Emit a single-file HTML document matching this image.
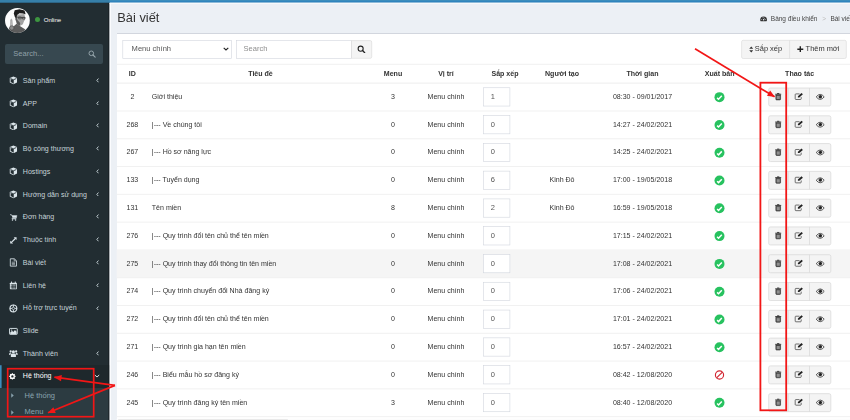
<!DOCTYPE html>
<html lang="vi"><head><meta charset="utf-8"><title>Bài viết</title>
<style>
*{box-sizing:border-box;margin:0;padding:0}
html,body{width:850px;height:420px;overflow:hidden}
body{background:#ecf0f5;font-family:"Liberation Sans",Arial,sans-serif;color:#333;position:relative;font-size:7.05px}
.abs{position:absolute}
#topbar{left:0;top:0;width:850px;height:2.4px;background:#3c8dbc}
#toplogo{left:0;top:0;width:109.2px;height:2.4px;background:#367fa9}
#side{left:0;top:2.4px;width:109.2px;height:418px;background:#222d32}
  .mtext{position:absolute;left:22.8px;font-size:7.08px;color:#c6d3d9;line-height:10px;height:10px;white-space:nowrap}
.mi{position:absolute;left:8.9px;width:8.8px;height:8.8px}
.chev{position:absolute;left:95.8px;width:3.2px;height:4.8px}
.c{position:absolute;width:120px;text-align:center;white-space:nowrap;line-height:10px;height:10px}
.l{position:absolute;white-space:nowrap;line-height:10px;height:10px}
.th{font-weight:bold}
.rowline{position:absolute;left:116.7px;width:740px;height:0.6px;background:#f0f0f0}
.inp{position:absolute;left:483.2px;width:26.8px;height:18.7px;border:0.6px solid #d2d6de;background:#fff;font-size:7.05px;line-height:17.5px;padding-left:8.6px;color:#555}
.btn{position:absolute;height:18px;background:#f4f4f4;border:0.6px solid #ddd}
.ico{position:absolute}
</style></head><body style="filter:blur(0.3px)">

<svg class="abs" style="left:0;top:0;width:850px;height:420px" viewBox="0 0 850 420">
<rect x="0" y="2" width="109.4" height="420" fill="#222d32"/>
<rect x="0" y="365.2" width="109.4" height="22.9" fill="#1e282c"/><rect x="0" y="365.2" width="1.6" height="22.9" fill="#3c8dbc"/>
<rect x="0" y="388.1" width="109.4" height="33" fill="#2c3b41"/>
<path d="M108.95 2.4 V420" stroke="#141b1e" stroke-width="0.9"/>
<path d="M110.3 3 V420" stroke="#fbfcfe" stroke-width="1.5"/><path d="M109.6 3.45 H850" stroke="#f9fafc" stroke-width="0.9"/>
<rect x="0" y="0" width="850" height="2.3" fill="#3c8dbc"/><rect x="0" y="1" width="850" height="1.3" fill="#2f84bd"/><rect x="0" y="0" width="109.4" height="2.3" fill="#367fa9"/>
</svg>
<svg class="abs" style="left:5.3px;top:7.95px;width:24.9px;height:24.9px" viewBox="0 0 50 50">
<defs><clipPath id="av"><circle cx="25" cy="25" r="25"/></clipPath></defs>
<g clip-path="url(#av)"><rect width="50" height="50" fill="#fcfcfc"/>
<path d="M23.8 31 L29.8 36.2 L41 43 L36 50 L9 50 L8.3 39.7 L17 37 Z" fill="#5d5d5d"/>
<path d="M20.3 13.8 L39.3 12 L40.4 22.4 L37.5 28 L35.9 32.8 L29.8 36.4 L23.8 31 L20.6 23Z" fill="#a3a3a3"/>
<path d="M21 22 L24 31.4 L29.6 36.4 L30.5 30 L25 24 L23 15Z" fill="#5a5a5a"/>
<path d="M17.6 11 L19.5 4.6 L29 2.4 L39.3 5 L41.4 12.6 L36 11.2 L29 10.4 L24.2 14 L22.6 19.5 L20.2 19Z" fill="#1d1d1d"/>
<path d="M23 18.4 L41 19.6 M27.5 18 h5.2 v3.8 h-5.2z M35.2 18.6 h5 v3.6 h-5z" stroke="#2a2a2a" stroke-width="1.1" fill="none"/>
<path d="M11.2 37 L11.6 23.4 Q12.8 21.6 14 23.4 L15 37Z" fill="#c9c9c9" stroke="#555" stroke-width=".8"/>
<circle cx="13.6" cy="40" r="4.4" fill="#8d8d8d" stroke="#3a3a3a" stroke-width="1"/>
</g></svg>
<div class="abs" style="left:35.2px;top:16.6px;width:5px;height:5px;border-radius:50%;background:#3d9640"></div>
<div class="l" style="left:43.7px;top:14.7px;font-size:6.05px;color:#fff">Online</div>
<div class="abs" style="left:5.3px;top:43.7px;width:98px;height:20px;background:#374850;border-radius:2px"></div>
<div class="l" style="left:13.3px;top:48.6px;font-size:7.55px;color:#90a0a8">Search...</div>
<svg class="abs" style="left:87.8px;top:49.8px;width:8px;height:8px" viewBox="0 0 16 16"><circle cx="6.6" cy="6.6" r="4.6" fill="none" stroke="#97a6ad" stroke-width="1.9"/><path d="M10 10 L14.4 14.4" stroke="#97a6ad" stroke-width="2.2" stroke-linecap="round"/></svg>
<svg class="mi" style="top:76.2px" viewBox="0 0 16 16"><path d="M8 0.8 L14.6 3.6 V11.6 L8 15.2 L1.4 11.6 V3.6 Z" fill="#dbe5ea"/><path d="M2.6 4.6 L8 6.9 L13.4 4.6 M8 6.9 V13.8" stroke="#222d32" stroke-width="1.5" fill="none"/><path d="M3 5.3 L7.3 7.2 V13 L3 10.8Z" fill="#222d32"/></svg>
<div class="mtext" style="top:75.7px">Sản phẩm</div>
<svg class="chev" style="top:77.8px" viewBox="0 0 6 9"><path d="M4.6 1 L1.6 4.5 L4.6 8" fill="none" stroke="#cfdbe0" stroke-width="1.7"/></svg>
<svg class="mi" style="top:99.0px" viewBox="0 0 16 16"><path d="M8 0.8 L14.6 3.6 V11.6 L8 15.2 L1.4 11.6 V3.6 Z" fill="#dbe5ea"/><path d="M2.6 4.6 L8 6.9 L13.4 4.6 M8 6.9 V13.8" stroke="#222d32" stroke-width="1.5" fill="none"/><path d="M3 5.3 L7.3 7.2 V13 L3 10.8Z" fill="#222d32"/></svg>
<div class="mtext" style="top:98.5px">APP</div>
<svg class="chev" style="top:100.6px" viewBox="0 0 6 9"><path d="M4.6 1 L1.6 4.5 L4.6 8" fill="none" stroke="#cfdbe0" stroke-width="1.7"/></svg>
<svg class="mi" style="top:121.7px" viewBox="0 0 16 16"><path d="M8 0.8 L14.6 3.6 V11.6 L8 15.2 L1.4 11.6 V3.6 Z" fill="#dbe5ea"/><path d="M2.6 4.6 L8 6.9 L13.4 4.6 M8 6.9 V13.8" stroke="#222d32" stroke-width="1.5" fill="none"/><path d="M3 5.3 L7.3 7.2 V13 L3 10.8Z" fill="#222d32"/></svg>
<div class="mtext" style="top:121.2px">Domain</div>
<svg class="chev" style="top:123.3px" viewBox="0 0 6 9"><path d="M4.6 1 L1.6 4.5 L4.6 8" fill="none" stroke="#cfdbe0" stroke-width="1.7"/></svg>
<svg class="mi" style="top:144.5px" viewBox="0 0 16 16"><path d="M8 0.8 L14.6 3.6 V11.6 L8 15.2 L1.4 11.6 V3.6 Z" fill="#dbe5ea"/><path d="M2.6 4.6 L8 6.9 L13.4 4.6 M8 6.9 V13.8" stroke="#222d32" stroke-width="1.5" fill="none"/><path d="M3 5.3 L7.3 7.2 V13 L3 10.8Z" fill="#222d32"/></svg>
<div class="mtext" style="top:144.0px">Bộ công thương</div>
<svg class="chev" style="top:146.1px" viewBox="0 0 6 9"><path d="M4.6 1 L1.6 4.5 L4.6 8" fill="none" stroke="#cfdbe0" stroke-width="1.7"/></svg>
<svg class="mi" style="top:167.3px" viewBox="0 0 16 16"><path d="M8 0.8 L14.6 3.6 V11.6 L8 15.2 L1.4 11.6 V3.6 Z" fill="#dbe5ea"/><path d="M2.6 4.6 L8 6.9 L13.4 4.6 M8 6.9 V13.8" stroke="#222d32" stroke-width="1.5" fill="none"/><path d="M3 5.3 L7.3 7.2 V13 L3 10.8Z" fill="#222d32"/></svg>
<div class="mtext" style="top:166.8px">Hostings</div>
<svg class="chev" style="top:168.9px" viewBox="0 0 6 9"><path d="M4.6 1 L1.6 4.5 L4.6 8" fill="none" stroke="#cfdbe0" stroke-width="1.7"/></svg>
<svg class="mi" style="top:190.1px" viewBox="0 0 16 16"><path d="M8 0.8 L14.6 3.6 V11.6 L8 15.2 L1.4 11.6 V3.6 Z" fill="#dbe5ea"/><path d="M2.6 4.6 L8 6.9 L13.4 4.6 M8 6.9 V13.8" stroke="#222d32" stroke-width="1.5" fill="none"/><path d="M3 5.3 L7.3 7.2 V13 L3 10.8Z" fill="#222d32"/></svg>
<div class="mtext" style="top:189.6px">Hướng dẫn sử dụng</div>
<svg class="chev" style="top:191.7px" viewBox="0 0 6 9"><path d="M4.6 1 L1.6 4.5 L4.6 8" fill="none" stroke="#cfdbe0" stroke-width="1.7"/></svg>
<svg class="mi" style="top:212.8px" viewBox="0 0 16 16"><g transform="translate(1.6 1.4) scale(0.84)"><path d="M0.5 2 H3.2 L4 4 H15 L13.6 9.6 H5 L4.6 11 H13.8" stroke="#dbe5ea" stroke-width="1.7" fill="none"/><path d="M4.6 5 H14 L13.1 8.6 H5.6Z" fill="#dbe5ea"/><circle cx="5.6" cy="13.4" r="1.5" fill="#dbe5ea"/><circle cx="12.4" cy="13.4" r="1.5" fill="#dbe5ea"/></g></svg>
<div class="mtext" style="top:212.3px">Đơn hàng</div>
<svg class="chev" style="top:214.4px" viewBox="0 0 6 9"><path d="M4.6 1 L1.6 4.5 L4.6 8" fill="none" stroke="#cfdbe0" stroke-width="1.7"/></svg>
<svg class="mi" style="top:235.6px" viewBox="0 0 16 16"><path d="M4 12 L12 4" stroke="#dbe5ea" stroke-width="2.2"/><path d="M8.5 2.2 H13.8 V7.5Z M2.2 8.5 V13.8 H7.5Z" fill="#dbe5ea"/></svg>
<div class="mtext" style="top:235.1px">Thuộc tính</div>
<svg class="chev" style="top:237.2px" viewBox="0 0 6 9"><path d="M4.6 1 L1.6 4.5 L4.6 8" fill="none" stroke="#cfdbe0" stroke-width="1.7"/></svg>
<svg class="mi" style="top:258.4px" viewBox="0 0 16 16"><path d="M2.4 1.4 H9.6 L13.6 5 V14.8 H2.4Z" fill="none" stroke="#dbe5ea" stroke-width="1.5" stroke-linejoin="round"/><path d="M9.4 1.6 V5.2 H13.4" fill="none" stroke="#dbe5ea" stroke-width="1.1"/><path d="M5 7.6 H11 M5 9.9 H11 M5 12.2 H11" stroke="#dbe5ea" stroke-width="1.1"/></svg>
<div class="mtext" style="top:257.9px">Bài viết</div>
<svg class="chev" style="top:260.0px" viewBox="0 0 6 9"><path d="M4.6 1 L1.6 4.5 L4.6 8" fill="none" stroke="#cfdbe0" stroke-width="1.7"/></svg>
<svg class="mi" style="top:281.1px" viewBox="0 0 16 16"><rect x="1.6" y="3" width="12.8" height="11.8" rx="1" fill="#dbe5ea"/><path d="M4.6 1 V4.4 M11.4 1 V4.4" stroke="#dbe5ea" stroke-width="1.8"/><path d="M3 7 H13 M3 9.8 H13 M3 12.4 H13 M6 6 V14 M9 6 V14 M12 6 V14" stroke="#222d32" stroke-width="1.25"/></svg>
<div class="mtext" style="top:280.6px">Liên hệ</div>
<svg class="chev" style="top:282.7px" viewBox="0 0 6 9"><path d="M4.6 1 L1.6 4.5 L4.6 8" fill="none" stroke="#cfdbe0" stroke-width="1.7"/></svg>
<svg class="mi" style="top:303.9px" viewBox="0 0 16 16"><circle cx="8" cy="8" r="6.2" fill="none" stroke="#dbe5ea" stroke-width="2.2"/><path d="M1.4 8 H14.6 M8 1.4 V14.6" stroke="#dbe5ea" stroke-width="1.6"/><circle cx="8" cy="8" r="2.3" fill="#222d32" stroke="#dbe5ea" stroke-width="1.2"/></svg>
<div class="mtext" style="top:303.4px">Hỗ trợ trực tuyến</div>
<svg class="chev" style="top:305.5px" viewBox="0 0 6 9"><path d="M4.6 1 L1.6 4.5 L4.6 8" fill="none" stroke="#cfdbe0" stroke-width="1.7"/></svg>
<svg class="mi" style="top:326.7px" viewBox="0 0 16 16"><rect x="1" y="2.6" width="14" height="10.8" rx="1" fill="none" stroke="#dbe5ea" stroke-width="1.7"/><path d="M2.2 12.6 V10.2 L5.6 6.8 L7.8 9 L10.8 5.4 L13.8 8.8 V12.6Z" fill="#dbe5ea"/><circle cx="4.8" cy="5.6" r="1.2" fill="#dbe5ea"/></svg>
<div class="mtext" style="top:326.2px">Slide</div>
<svg class="mi" style="top:349.4px" viewBox="0 0 16 16"><circle cx="8" cy="5" r="2.8" fill="#dbe5ea"/><path d="M3.4 14.6 V11 Q3.4 8.4 6 8.4 H10 Q12.6 8.4 12.6 11 V14.6Z" fill="#dbe5ea"/><circle cx="3" cy="4.4" r="2" fill="#dbe5ea"/><circle cx="13" cy="4.4" r="2" fill="#dbe5ea"/><path d="M0.4 11 V8.8 Q0.4 7 2.4 7 H4 Q2.6 8.4 2.6 11Z M15.6 11 V8.8 Q15.6 7 13.6 7 H12 Q13.4 8.4 13.4 11Z" fill="#dbe5ea"/></svg>
<div class="mtext" style="top:348.9px">Thành viên</div>
<svg class="chev" style="top:351.0px" viewBox="0 0 6 9"><path d="M4.6 1 L1.6 4.5 L4.6 8" fill="none" stroke="#cfdbe0" stroke-width="1.7"/></svg>
<svg class="mi" style="top:373px;left:9.4px;width:6.8px;height:6.8px" viewBox="0 0 16 16"><circle cx="8" cy="8" r="4.4" fill="none" stroke="#fff" stroke-width="3.2"/><path d="M8 0.6 V3 M8 13 V15.4 M0.6 8 H3 M13 8 H15.4 M2.8 2.8 L4.5 4.5 M11.5 11.5 L13.2 13.2 M2.8 13.2 L4.5 11.5 M11.5 4.5 L13.2 2.8" stroke="#fff" stroke-width="2.6"/></svg>
<div class="mtext" style="top:371.3px;color:#fff">Hệ thống</div>
<svg class="abs" style="left:94.3px;top:373.8px;width:6px;height:4px" viewBox="0 0 12 8"><path d="M1.6 2 L6 6 L10.4 2" fill="none" stroke="#fff" stroke-width="1.7"/></svg>
<svg class="abs" style="left:11.3px;top:393.1px;width:3px;height:5px" viewBox="0 0 6 10"><path d="M0.5 0.5 L5.5 5 L0.5 9.5Z" fill="#8aa4af"/></svg>
<div class="l" style="left:24.6px;top:390.6px;font-size:7.5px;color:#8aa4af">Hệ thống</div>
<svg class="abs" style="left:11.3px;top:409.5px;width:3px;height:5px" viewBox="0 0 6 10"><path d="M0.5 0.5 L5.5 5 L0.5 9.5Z" fill="#8aa4af"/></svg>
<div class="l" style="left:24.6px;top:407.0px;font-size:7.5px;color:#8aa4af">Menu</div>
<div class="l" style="left:117.3px;top:9.1px;font-size:12.85px;line-height:18px;height:18px;color:#333">Bài viết</div>
<svg class="abs" style="left:759.6px;top:15.3px;width:7.2px;height:6.9px" viewBox="0 0 14 12"><path d="M0.4 9 A6.6 6.6 0 0 1 13.6 9 Q13.6 11 12.6 11.6 H1.4 Q0.4 11 0.4 9Z" fill="#333"/><circle cx="7" cy="8.6" r="1.5" fill="#ecf0f5"/><path d="M7 8.4 L9.4 4.6" stroke="#ecf0f5" stroke-width="1"/><circle cx="3" cy="8" r=".8" fill="#ecf0f5"/><circle cx="11" cy="8" r=".8" fill="#ecf0f5"/><circle cx="4.4" cy="4.8" r=".8" fill="#ecf0f5"/><circle cx="7" cy="3.6" r=".8" fill="#ecf0f5"/></svg>
<div class="l" style="left:770.8px;top:13.8px;font-size:6.5px;color:#444">Bảng điều khiển</div>
<div class="l" style="left:822.2px;top:13.8px;font-size:6.5px;color:#bbb">&gt;</div>
<div class="l" style="left:830.4px;top:13.8px;font-size:6.5px;color:#444">Bài viết</div>
<div class="abs" style="left:116.7px;top:32.6px;width:740px;height:390px;background:#fff;border-top:1.6px solid #d2d6de"></div>
<svg class="abs" style="left:0;top:0;width:850px;height:420px" viewBox="0 0 850 420">
<rect x="122.8" y="40.5" width="108.7" height="17.9" fill="#fff" stroke="#d2d6de" stroke-width="0.6"/>
<rect x="236.5" y="40.6" width="115" height="17.7" fill="#fff" stroke="#d2d6de" stroke-width="0.6"/>
<path d="M351.5 40.6 H370.2 Q371.7 40.6 371.7 42.1 V56.8 Q371.7 58.3 370.2 58.3 H351.5Z" fill="#f4f4f4" stroke="#d8d8d8" stroke-width="0.6"/>
<rect x="741.6" y="40.3" width="104.7" height="18.2" rx="1.6" fill="#f4f4f4" stroke="#d8d8d8" stroke-width="0.6"/>
<path d="M789.6 40.4 V58.4" stroke="#d8d8d8" stroke-width="0.6"/>
<path d="M116.7 64.3 H850" stroke="#f1f1f1" stroke-width="1"/>
<path d="M116.7 83.2 H850" stroke="#f1f1f1" stroke-width="1.3"/>
<rect x="483.5" y="87.75" width="26.4" height="18.3" fill="#fff" stroke="#d2d6de" stroke-width="0.6"/>
<g transform="translate(719.50 97.14)"><circle r="5" fill="#27c25f"/><path d="M-2.4 0.7 L-0.95 2.1 L2.3 -1.35" fill="none" stroke="#fff" stroke-width="1.5"/></g>
<rect x="768.7" y="88.00" width="62.1" height="18" rx="1.6" fill="#f4f4f4" stroke="#dadada" stroke-width="0.8"/>
<path d="M788.2 88.00 v18 M809.5 88.00 v18" stroke="#dadada" stroke-width="0.8"/>
<g transform="translate(778.20 96.59)"><path d="M-3 -2.35 H3 M-1.1 -3.1 H1.1" stroke="#222" stroke-width="0.85"/><path d="M-2.35 -1.6 H2.35 V2.6 Q2.35 3.3 1.65 3.3 H-1.65 Q-2.35 3.3 -2.35 2.6Z" fill="#5a5a5a" stroke="#1a1a1a" stroke-width="0.55"/><path d="M-0.95 -0.7 V2.4 M0 -0.7 V2.4 M0.95 -0.7 V2.4" stroke="#cfcfcf" stroke-width="0.5"/></g>
<g transform="translate(798.90 96.50)"><path d="M2.3 0.6 V2.3 Q2.3 3 1.6 3 H-3 Q-3.7 3 -3.7 2.3 V-1.9 Q-3.7 -2.6 -3 -2.6 H0.6" fill="none" stroke="#444" stroke-width="0.75"/><path d="M-1 1 V-0.3 L2.6 -3.5 L4 -2.2 L0.4 1Z" fill="#222"/></g>
<g transform="translate(820.20 96.89)"><path d="M-4 0 Q-2 -2.5 0 -2.5 Q2 -2.5 4 0 Q2 2.5 0 2.5 Q-2 2.5 -4 0Z" fill="#f4f4f4" stroke="#333" stroke-width="0.8"/><circle cx="0.1" cy="-0.2" r="1.75" fill="#222"/><path d="M-1.2 -0.5 A1.3 1.3 0 0 1 0 -1.55" stroke="#999" stroke-width="0.4" fill="none"/></g>
<path d="M116.7 110.99 H850" stroke="#f1f1f1" stroke-width="1"/>
<rect x="483.5" y="115.54" width="26.4" height="18.3" fill="#fff" stroke="#d2d6de" stroke-width="0.6"/>
<g transform="translate(719.50 124.94)"><circle r="5" fill="#27c25f"/><path d="M-2.4 0.7 L-0.95 2.1 L2.3 -1.35" fill="none" stroke="#fff" stroke-width="1.5"/></g>
<rect x="768.7" y="115.79" width="62.1" height="18" rx="1.6" fill="#f4f4f4" stroke="#dadada" stroke-width="0.8"/>
<path d="M788.2 115.79 v18 M809.5 115.79 v18" stroke="#dadada" stroke-width="0.8"/>
<g transform="translate(778.20 124.39)"><path d="M-3 -2.35 H3 M-1.1 -3.1 H1.1" stroke="#222" stroke-width="0.85"/><path d="M-2.35 -1.6 H2.35 V2.6 Q2.35 3.3 1.65 3.3 H-1.65 Q-2.35 3.3 -2.35 2.6Z" fill="#5a5a5a" stroke="#1a1a1a" stroke-width="0.55"/><path d="M-0.95 -0.7 V2.4 M0 -0.7 V2.4 M0.95 -0.7 V2.4" stroke="#cfcfcf" stroke-width="0.5"/></g>
<g transform="translate(798.90 124.29)"><path d="M2.3 0.6 V2.3 Q2.3 3 1.6 3 H-3 Q-3.7 3 -3.7 2.3 V-1.9 Q-3.7 -2.6 -3 -2.6 H0.6" fill="none" stroke="#444" stroke-width="0.75"/><path d="M-1 1 V-0.3 L2.6 -3.5 L4 -2.2 L0.4 1Z" fill="#222"/></g>
<g transform="translate(820.20 124.69)"><path d="M-4 0 Q-2 -2.5 0 -2.5 Q2 -2.5 4 0 Q2 2.5 0 2.5 Q-2 2.5 -4 0Z" fill="#f4f4f4" stroke="#333" stroke-width="0.8"/><circle cx="0.1" cy="-0.2" r="1.75" fill="#222"/><path d="M-1.2 -0.5 A1.3 1.3 0 0 1 0 -1.55" stroke="#999" stroke-width="0.4" fill="none"/></g>
<path d="M116.7 138.78 H850" stroke="#f1f1f1" stroke-width="1"/>
<rect x="483.5" y="143.33" width="26.4" height="18.3" fill="#fff" stroke="#d2d6de" stroke-width="0.6"/>
<g transform="translate(719.50 152.73)"><circle r="5" fill="#27c25f"/><path d="M-2.4 0.7 L-0.95 2.1 L2.3 -1.35" fill="none" stroke="#fff" stroke-width="1.5"/></g>
<rect x="768.7" y="143.58" width="62.1" height="18" rx="1.6" fill="#f4f4f4" stroke="#dadada" stroke-width="0.8"/>
<path d="M788.2 143.58 v18 M809.5 143.58 v18" stroke="#dadada" stroke-width="0.8"/>
<g transform="translate(778.20 152.18)"><path d="M-3 -2.35 H3 M-1.1 -3.1 H1.1" stroke="#222" stroke-width="0.85"/><path d="M-2.35 -1.6 H2.35 V2.6 Q2.35 3.3 1.65 3.3 H-1.65 Q-2.35 3.3 -2.35 2.6Z" fill="#5a5a5a" stroke="#1a1a1a" stroke-width="0.55"/><path d="M-0.95 -0.7 V2.4 M0 -0.7 V2.4 M0.95 -0.7 V2.4" stroke="#cfcfcf" stroke-width="0.5"/></g>
<g transform="translate(798.90 152.08)"><path d="M2.3 0.6 V2.3 Q2.3 3 1.6 3 H-3 Q-3.7 3 -3.7 2.3 V-1.9 Q-3.7 -2.6 -3 -2.6 H0.6" fill="none" stroke="#444" stroke-width="0.75"/><path d="M-1 1 V-0.3 L2.6 -3.5 L4 -2.2 L0.4 1Z" fill="#222"/></g>
<g transform="translate(820.20 152.48)"><path d="M-4 0 Q-2 -2.5 0 -2.5 Q2 -2.5 4 0 Q2 2.5 0 2.5 Q-2 2.5 -4 0Z" fill="#f4f4f4" stroke="#333" stroke-width="0.8"/><circle cx="0.1" cy="-0.2" r="1.75" fill="#222"/><path d="M-1.2 -0.5 A1.3 1.3 0 0 1 0 -1.55" stroke="#999" stroke-width="0.4" fill="none"/></g>
<path d="M116.7 166.57 H850" stroke="#f1f1f1" stroke-width="1"/>
<rect x="483.5" y="171.12" width="26.4" height="18.3" fill="#fff" stroke="#d2d6de" stroke-width="0.6"/>
<g transform="translate(719.50 180.52)"><circle r="5" fill="#27c25f"/><path d="M-2.4 0.7 L-0.95 2.1 L2.3 -1.35" fill="none" stroke="#fff" stroke-width="1.5"/></g>
<rect x="768.7" y="171.37" width="62.1" height="18" rx="1.6" fill="#f4f4f4" stroke="#dadada" stroke-width="0.8"/>
<path d="M788.2 171.37 v18 M809.5 171.37 v18" stroke="#dadada" stroke-width="0.8"/>
<g transform="translate(778.20 179.97)"><path d="M-3 -2.35 H3 M-1.1 -3.1 H1.1" stroke="#222" stroke-width="0.85"/><path d="M-2.35 -1.6 H2.35 V2.6 Q2.35 3.3 1.65 3.3 H-1.65 Q-2.35 3.3 -2.35 2.6Z" fill="#5a5a5a" stroke="#1a1a1a" stroke-width="0.55"/><path d="M-0.95 -0.7 V2.4 M0 -0.7 V2.4 M0.95 -0.7 V2.4" stroke="#cfcfcf" stroke-width="0.5"/></g>
<g transform="translate(798.90 179.87)"><path d="M2.3 0.6 V2.3 Q2.3 3 1.6 3 H-3 Q-3.7 3 -3.7 2.3 V-1.9 Q-3.7 -2.6 -3 -2.6 H0.6" fill="none" stroke="#444" stroke-width="0.75"/><path d="M-1 1 V-0.3 L2.6 -3.5 L4 -2.2 L0.4 1Z" fill="#222"/></g>
<g transform="translate(820.20 180.27)"><path d="M-4 0 Q-2 -2.5 0 -2.5 Q2 -2.5 4 0 Q2 2.5 0 2.5 Q-2 2.5 -4 0Z" fill="#f4f4f4" stroke="#333" stroke-width="0.8"/><circle cx="0.1" cy="-0.2" r="1.75" fill="#222"/><path d="M-1.2 -0.5 A1.3 1.3 0 0 1 0 -1.55" stroke="#999" stroke-width="0.4" fill="none"/></g>
<path d="M116.7 194.36 H850" stroke="#f1f1f1" stroke-width="1"/>
<rect x="483.5" y="198.91" width="26.4" height="18.3" fill="#fff" stroke="#d2d6de" stroke-width="0.6"/>
<g transform="translate(719.50 208.31)"><circle r="5" fill="#27c25f"/><path d="M-2.4 0.7 L-0.95 2.1 L2.3 -1.35" fill="none" stroke="#fff" stroke-width="1.5"/></g>
<rect x="768.7" y="199.16" width="62.1" height="18" rx="1.6" fill="#f4f4f4" stroke="#dadada" stroke-width="0.8"/>
<path d="M788.2 199.16 v18 M809.5 199.16 v18" stroke="#dadada" stroke-width="0.8"/>
<g transform="translate(778.20 207.76)"><path d="M-3 -2.35 H3 M-1.1 -3.1 H1.1" stroke="#222" stroke-width="0.85"/><path d="M-2.35 -1.6 H2.35 V2.6 Q2.35 3.3 1.65 3.3 H-1.65 Q-2.35 3.3 -2.35 2.6Z" fill="#5a5a5a" stroke="#1a1a1a" stroke-width="0.55"/><path d="M-0.95 -0.7 V2.4 M0 -0.7 V2.4 M0.95 -0.7 V2.4" stroke="#cfcfcf" stroke-width="0.5"/></g>
<g transform="translate(798.90 207.66)"><path d="M2.3 0.6 V2.3 Q2.3 3 1.6 3 H-3 Q-3.7 3 -3.7 2.3 V-1.9 Q-3.7 -2.6 -3 -2.6 H0.6" fill="none" stroke="#444" stroke-width="0.75"/><path d="M-1 1 V-0.3 L2.6 -3.5 L4 -2.2 L0.4 1Z" fill="#222"/></g>
<g transform="translate(820.20 208.06)"><path d="M-4 0 Q-2 -2.5 0 -2.5 Q2 -2.5 4 0 Q2 2.5 0 2.5 Q-2 2.5 -4 0Z" fill="#f4f4f4" stroke="#333" stroke-width="0.8"/><circle cx="0.1" cy="-0.2" r="1.75" fill="#222"/><path d="M-1.2 -0.5 A1.3 1.3 0 0 1 0 -1.55" stroke="#999" stroke-width="0.4" fill="none"/></g>
<path d="M116.7 222.15 H850" stroke="#f1f1f1" stroke-width="1"/>
<rect x="483.5" y="226.69" width="26.4" height="18.3" fill="#fff" stroke="#d2d6de" stroke-width="0.6"/>
<g transform="translate(719.50 236.09)"><circle r="5" fill="#27c25f"/><path d="M-2.4 0.7 L-0.95 2.1 L2.3 -1.35" fill="none" stroke="#fff" stroke-width="1.5"/></g>
<rect x="768.7" y="226.94" width="62.1" height="18" rx="1.6" fill="#f4f4f4" stroke="#dadada" stroke-width="0.8"/>
<path d="M788.2 226.94 v18 M809.5 226.94 v18" stroke="#dadada" stroke-width="0.8"/>
<g transform="translate(778.20 235.54)"><path d="M-3 -2.35 H3 M-1.1 -3.1 H1.1" stroke="#222" stroke-width="0.85"/><path d="M-2.35 -1.6 H2.35 V2.6 Q2.35 3.3 1.65 3.3 H-1.65 Q-2.35 3.3 -2.35 2.6Z" fill="#5a5a5a" stroke="#1a1a1a" stroke-width="0.55"/><path d="M-0.95 -0.7 V2.4 M0 -0.7 V2.4 M0.95 -0.7 V2.4" stroke="#cfcfcf" stroke-width="0.5"/></g>
<g transform="translate(798.90 235.44)"><path d="M2.3 0.6 V2.3 Q2.3 3 1.6 3 H-3 Q-3.7 3 -3.7 2.3 V-1.9 Q-3.7 -2.6 -3 -2.6 H0.6" fill="none" stroke="#444" stroke-width="0.75"/><path d="M-1 1 V-0.3 L2.6 -3.5 L4 -2.2 L0.4 1Z" fill="#222"/></g>
<g transform="translate(820.20 235.84)"><path d="M-4 0 Q-2 -2.5 0 -2.5 Q2 -2.5 4 0 Q2 2.5 0 2.5 Q-2 2.5 -4 0Z" fill="#f4f4f4" stroke="#333" stroke-width="0.8"/><circle cx="0.1" cy="-0.2" r="1.75" fill="#222"/><path d="M-1.2 -0.5 A1.3 1.3 0 0 1 0 -1.55" stroke="#999" stroke-width="0.4" fill="none"/></g>
<path d="M116.7 249.94 H850" stroke="#f1f1f1" stroke-width="1"/>
<rect x="116.7" y="249.94" width="740" height="27.79" fill="#f5f5f5"/>
<rect x="483.5" y="254.48" width="26.4" height="18.3" fill="#fff" stroke="#d2d6de" stroke-width="0.6"/>
<g transform="translate(719.50 263.88)"><circle r="5" fill="#27c25f"/><path d="M-2.4 0.7 L-0.95 2.1 L2.3 -1.35" fill="none" stroke="#fff" stroke-width="1.5"/></g>
<rect x="768.7" y="254.73" width="62.1" height="18" rx="1.6" fill="#f4f4f4" stroke="#dadada" stroke-width="0.8"/>
<path d="M788.2 254.73 v18 M809.5 254.73 v18" stroke="#dadada" stroke-width="0.8"/>
<g transform="translate(778.20 263.33)"><path d="M-3 -2.35 H3 M-1.1 -3.1 H1.1" stroke="#222" stroke-width="0.85"/><path d="M-2.35 -1.6 H2.35 V2.6 Q2.35 3.3 1.65 3.3 H-1.65 Q-2.35 3.3 -2.35 2.6Z" fill="#5a5a5a" stroke="#1a1a1a" stroke-width="0.55"/><path d="M-0.95 -0.7 V2.4 M0 -0.7 V2.4 M0.95 -0.7 V2.4" stroke="#cfcfcf" stroke-width="0.5"/></g>
<g transform="translate(798.90 263.23)"><path d="M2.3 0.6 V2.3 Q2.3 3 1.6 3 H-3 Q-3.7 3 -3.7 2.3 V-1.9 Q-3.7 -2.6 -3 -2.6 H0.6" fill="none" stroke="#444" stroke-width="0.75"/><path d="M-1 1 V-0.3 L2.6 -3.5 L4 -2.2 L0.4 1Z" fill="#222"/></g>
<g transform="translate(820.20 263.63)"><path d="M-4 0 Q-2 -2.5 0 -2.5 Q2 -2.5 4 0 Q2 2.5 0 2.5 Q-2 2.5 -4 0Z" fill="#f4f4f4" stroke="#333" stroke-width="0.8"/><circle cx="0.1" cy="-0.2" r="1.75" fill="#222"/><path d="M-1.2 -0.5 A1.3 1.3 0 0 1 0 -1.55" stroke="#999" stroke-width="0.4" fill="none"/></g>
<path d="M116.7 277.73 H850" stroke="#f1f1f1" stroke-width="1"/>
<rect x="483.5" y="282.27" width="26.4" height="18.3" fill="#fff" stroke="#d2d6de" stroke-width="0.6"/>
<g transform="translate(719.50 291.68)"><circle r="5" fill="#27c25f"/><path d="M-2.4 0.7 L-0.95 2.1 L2.3 -1.35" fill="none" stroke="#fff" stroke-width="1.5"/></g>
<rect x="768.7" y="282.52" width="62.1" height="18" rx="1.6" fill="#f4f4f4" stroke="#dadada" stroke-width="0.8"/>
<path d="M788.2 282.52 v18 M809.5 282.52 v18" stroke="#dadada" stroke-width="0.8"/>
<g transform="translate(778.20 291.12)"><path d="M-3 -2.35 H3 M-1.1 -3.1 H1.1" stroke="#222" stroke-width="0.85"/><path d="M-2.35 -1.6 H2.35 V2.6 Q2.35 3.3 1.65 3.3 H-1.65 Q-2.35 3.3 -2.35 2.6Z" fill="#5a5a5a" stroke="#1a1a1a" stroke-width="0.55"/><path d="M-0.95 -0.7 V2.4 M0 -0.7 V2.4 M0.95 -0.7 V2.4" stroke="#cfcfcf" stroke-width="0.5"/></g>
<g transform="translate(798.90 291.02)"><path d="M2.3 0.6 V2.3 Q2.3 3 1.6 3 H-3 Q-3.7 3 -3.7 2.3 V-1.9 Q-3.7 -2.6 -3 -2.6 H0.6" fill="none" stroke="#444" stroke-width="0.75"/><path d="M-1 1 V-0.3 L2.6 -3.5 L4 -2.2 L0.4 1Z" fill="#222"/></g>
<g transform="translate(820.20 291.43)"><path d="M-4 0 Q-2 -2.5 0 -2.5 Q2 -2.5 4 0 Q2 2.5 0 2.5 Q-2 2.5 -4 0Z" fill="#f4f4f4" stroke="#333" stroke-width="0.8"/><circle cx="0.1" cy="-0.2" r="1.75" fill="#222"/><path d="M-1.2 -0.5 A1.3 1.3 0 0 1 0 -1.55" stroke="#999" stroke-width="0.4" fill="none"/></g>
<path d="M116.7 305.52 H850" stroke="#f1f1f1" stroke-width="1"/>
<rect x="483.5" y="310.06" width="26.4" height="18.3" fill="#fff" stroke="#d2d6de" stroke-width="0.6"/>
<g transform="translate(719.50 319.46)"><circle r="5" fill="#27c25f"/><path d="M-2.4 0.7 L-0.95 2.1 L2.3 -1.35" fill="none" stroke="#fff" stroke-width="1.5"/></g>
<rect x="768.7" y="310.31" width="62.1" height="18" rx="1.6" fill="#f4f4f4" stroke="#dadada" stroke-width="0.8"/>
<path d="M788.2 310.31 v18 M809.5 310.31 v18" stroke="#dadada" stroke-width="0.8"/>
<g transform="translate(778.20 318.91)"><path d="M-3 -2.35 H3 M-1.1 -3.1 H1.1" stroke="#222" stroke-width="0.85"/><path d="M-2.35 -1.6 H2.35 V2.6 Q2.35 3.3 1.65 3.3 H-1.65 Q-2.35 3.3 -2.35 2.6Z" fill="#5a5a5a" stroke="#1a1a1a" stroke-width="0.55"/><path d="M-0.95 -0.7 V2.4 M0 -0.7 V2.4 M0.95 -0.7 V2.4" stroke="#cfcfcf" stroke-width="0.5"/></g>
<g transform="translate(798.90 318.81)"><path d="M2.3 0.6 V2.3 Q2.3 3 1.6 3 H-3 Q-3.7 3 -3.7 2.3 V-1.9 Q-3.7 -2.6 -3 -2.6 H0.6" fill="none" stroke="#444" stroke-width="0.75"/><path d="M-1 1 V-0.3 L2.6 -3.5 L4 -2.2 L0.4 1Z" fill="#222"/></g>
<g transform="translate(820.20 319.21)"><path d="M-4 0 Q-2 -2.5 0 -2.5 Q2 -2.5 4 0 Q2 2.5 0 2.5 Q-2 2.5 -4 0Z" fill="#f4f4f4" stroke="#333" stroke-width="0.8"/><circle cx="0.1" cy="-0.2" r="1.75" fill="#222"/><path d="M-1.2 -0.5 A1.3 1.3 0 0 1 0 -1.55" stroke="#999" stroke-width="0.4" fill="none"/></g>
<path d="M116.7 333.31 H850" stroke="#f1f1f1" stroke-width="1"/>
<rect x="483.5" y="337.85" width="26.4" height="18.3" fill="#fff" stroke="#d2d6de" stroke-width="0.6"/>
<g transform="translate(719.50 347.25)"><circle r="5" fill="#27c25f"/><path d="M-2.4 0.7 L-0.95 2.1 L2.3 -1.35" fill="none" stroke="#fff" stroke-width="1.5"/></g>
<rect x="768.7" y="338.10" width="62.1" height="18" rx="1.6" fill="#f4f4f4" stroke="#dadada" stroke-width="0.8"/>
<path d="M788.2 338.10 v18 M809.5 338.10 v18" stroke="#dadada" stroke-width="0.8"/>
<g transform="translate(778.20 346.70)"><path d="M-3 -2.35 H3 M-1.1 -3.1 H1.1" stroke="#222" stroke-width="0.85"/><path d="M-2.35 -1.6 H2.35 V2.6 Q2.35 3.3 1.65 3.3 H-1.65 Q-2.35 3.3 -2.35 2.6Z" fill="#5a5a5a" stroke="#1a1a1a" stroke-width="0.55"/><path d="M-0.95 -0.7 V2.4 M0 -0.7 V2.4 M0.95 -0.7 V2.4" stroke="#cfcfcf" stroke-width="0.5"/></g>
<g transform="translate(798.90 346.60)"><path d="M2.3 0.6 V2.3 Q2.3 3 1.6 3 H-3 Q-3.7 3 -3.7 2.3 V-1.9 Q-3.7 -2.6 -3 -2.6 H0.6" fill="none" stroke="#444" stroke-width="0.75"/><path d="M-1 1 V-0.3 L2.6 -3.5 L4 -2.2 L0.4 1Z" fill="#222"/></g>
<g transform="translate(820.20 347.00)"><path d="M-4 0 Q-2 -2.5 0 -2.5 Q2 -2.5 4 0 Q2 2.5 0 2.5 Q-2 2.5 -4 0Z" fill="#f4f4f4" stroke="#333" stroke-width="0.8"/><circle cx="0.1" cy="-0.2" r="1.75" fill="#222"/><path d="M-1.2 -0.5 A1.3 1.3 0 0 1 0 -1.55" stroke="#999" stroke-width="0.4" fill="none"/></g>
<path d="M116.7 361.10 H850" stroke="#f1f1f1" stroke-width="1"/>
<rect x="483.5" y="365.64" width="26.4" height="18.3" fill="#fff" stroke="#d2d6de" stroke-width="0.6"/>
<g transform="translate(719.50 375.04)"><circle r="4.1" fill="none" stroke="#d2242f" stroke-width="1.15"/><path d="M-2.9 2.9 L2.9 -2.9" stroke="#d2242f" stroke-width="1.15"/></g>
<rect x="768.7" y="365.89" width="62.1" height="18" rx="1.6" fill="#f4f4f4" stroke="#dadada" stroke-width="0.8"/>
<path d="M788.2 365.89 v18 M809.5 365.89 v18" stroke="#dadada" stroke-width="0.8"/>
<g transform="translate(778.20 374.49)"><path d="M-3 -2.35 H3 M-1.1 -3.1 H1.1" stroke="#222" stroke-width="0.85"/><path d="M-2.35 -1.6 H2.35 V2.6 Q2.35 3.3 1.65 3.3 H-1.65 Q-2.35 3.3 -2.35 2.6Z" fill="#5a5a5a" stroke="#1a1a1a" stroke-width="0.55"/><path d="M-0.95 -0.7 V2.4 M0 -0.7 V2.4 M0.95 -0.7 V2.4" stroke="#cfcfcf" stroke-width="0.5"/></g>
<g transform="translate(798.90 374.39)"><path d="M2.3 0.6 V2.3 Q2.3 3 1.6 3 H-3 Q-3.7 3 -3.7 2.3 V-1.9 Q-3.7 -2.6 -3 -2.6 H0.6" fill="none" stroke="#444" stroke-width="0.75"/><path d="M-1 1 V-0.3 L2.6 -3.5 L4 -2.2 L0.4 1Z" fill="#222"/></g>
<g transform="translate(820.20 374.79)"><path d="M-4 0 Q-2 -2.5 0 -2.5 Q2 -2.5 4 0 Q2 2.5 0 2.5 Q-2 2.5 -4 0Z" fill="#f4f4f4" stroke="#333" stroke-width="0.8"/><circle cx="0.1" cy="-0.2" r="1.75" fill="#222"/><path d="M-1.2 -0.5 A1.3 1.3 0 0 1 0 -1.55" stroke="#999" stroke-width="0.4" fill="none"/></g>
<path d="M116.7 388.89 H850" stroke="#f1f1f1" stroke-width="1"/>
<rect x="483.5" y="393.43" width="26.4" height="18.3" fill="#fff" stroke="#d2d6de" stroke-width="0.6"/>
<g transform="translate(719.50 402.83)"><circle r="5" fill="#27c25f"/><path d="M-2.4 0.7 L-0.95 2.1 L2.3 -1.35" fill="none" stroke="#fff" stroke-width="1.5"/></g>
<rect x="768.7" y="393.68" width="62.1" height="18" rx="1.6" fill="#f4f4f4" stroke="#dadada" stroke-width="0.8"/>
<path d="M788.2 393.68 v18 M809.5 393.68 v18" stroke="#dadada" stroke-width="0.8"/>
<g transform="translate(778.20 402.28)"><path d="M-3 -2.35 H3 M-1.1 -3.1 H1.1" stroke="#222" stroke-width="0.85"/><path d="M-2.35 -1.6 H2.35 V2.6 Q2.35 3.3 1.65 3.3 H-1.65 Q-2.35 3.3 -2.35 2.6Z" fill="#5a5a5a" stroke="#1a1a1a" stroke-width="0.55"/><path d="M-0.95 -0.7 V2.4 M0 -0.7 V2.4 M0.95 -0.7 V2.4" stroke="#cfcfcf" stroke-width="0.5"/></g>
<g transform="translate(798.90 402.18)"><path d="M2.3 0.6 V2.3 Q2.3 3 1.6 3 H-3 Q-3.7 3 -3.7 2.3 V-1.9 Q-3.7 -2.6 -3 -2.6 H0.6" fill="none" stroke="#444" stroke-width="0.75"/><path d="M-1 1 V-0.3 L2.6 -3.5 L4 -2.2 L0.4 1Z" fill="#222"/></g>
<g transform="translate(820.20 402.58)"><path d="M-4 0 Q-2 -2.5 0 -2.5 Q2 -2.5 4 0 Q2 2.5 0 2.5 Q-2 2.5 -4 0Z" fill="#f4f4f4" stroke="#333" stroke-width="0.8"/><circle cx="0.1" cy="-0.2" r="1.75" fill="#222"/><path d="M-1.2 -0.5 A1.3 1.3 0 0 1 0 -1.55" stroke="#999" stroke-width="0.4" fill="none"/></g>
<path d="M116.7 416.68 H850" stroke="#f1f1f1" stroke-width="1"/>
<rect x="116.7" y="418.6" width="740" height="3" fill="#fcfcfc"/>
<rect x="118" y="418.9" width="170" height="3" rx="1" fill="#e9e9e9"/>
</svg>
<div class="l" style="left:131.6px;top:44.3px;font-size:7.55px;color:#555">Menu chính</div>
<svg class="abs" style="left:222.8px;top:47.3px;width:6px;height:4px" viewBox="0 0 12 8"><path d="M1.4 1.6 L6 6 L10.6 1.6" fill="none" stroke="#222" stroke-width="2.2"/></svg>
<div class="l" style="left:243.6px;top:44.3px;font-size:7.5px;color:#8e8e8e">Search</div>
<svg class="abs" style="left:357.4px;top:44.6px;width:8.6px;height:8.6px" viewBox="0 0 16 16"><circle cx="6.8" cy="6.8" r="4.7" fill="none" stroke="#222" stroke-width="2"/><path d="M10.4 10.4 L14.2 14.2" stroke="#222" stroke-width="2.6" stroke-linecap="round"/></svg>
<svg class="abs" style="left:748.6px;top:45.6px;width:4.6px;height:7px" viewBox="0 0 9 14"><path d="M0.4 5.6 L4.5 1 L8.6 5.6Z M0.4 8.4 L4.5 13 L8.6 8.4Z" fill="#333"/></svg>
<div class="l" style="left:754.8px;top:44px;font-size:7.45px;color:#333">Sắp xếp</div>
<svg class="abs" style="left:797.2px;top:45.8px;width:6.6px;height:6.6px" viewBox="0 0 12 12"><path d="M6 0.6 V11.4 M0.6 6 H11.4" stroke="#222" stroke-width="2.6"/></svg>
<div class="l" style="left:805.6px;top:44px;font-size:7.45px;color:#333">Thêm mới</div>
<div class="c th" style="left:72.4px;top:69.2px">ID</div>
<div class="c th" style="left:200.5px;top:69.2px">Tiêu đề</div>
<div class="c th" style="left:333.0px;top:69.2px">Menu</div>
<div class="c th" style="left:386.0px;top:69.2px">Vị trí</div>
<div class="c th" style="left:445.0px;top:69.2px">Sắp xếp</div>
<div class="c th" style="left:502.0px;top:69.2px">Người tạo</div>
<div class="c th" style="left:582.5px;top:69.2px">Thời gian</div>
<div class="c th" style="left:659.6px;top:69.2px">Xuất bản</div>
<div class="c th" style="left:739.6px;top:69.2px">Thao tác</div>
<div class="c" style="left:72.4px;top:91.8px">2</div>
<div class="l" style="left:151.8px;top:91.8px">Giới thiệu</div>
<div class="c" style="left:333.0px;top:91.8px">3</div>
<div class="c" style="left:386.0px;top:91.8px">Menu chính</div>
<div class="l" style="left:490.7px;top:91.8px;color:#555;font-size:7.5px">1</div>
<div class="c" style="left:582.5px;top:91.8px">08:30 - 09/01/2017</div>
<div class="c" style="left:72.4px;top:119.6px">268</div>
<div class="l" style="left:151.8px;top:119.6px">|--- Về chúng tôi</div>
<div class="c" style="left:333.0px;top:119.6px">0</div>
<div class="c" style="left:386.0px;top:119.6px">Menu chính</div>
<div class="l" style="left:490.7px;top:119.6px;color:#555;font-size:7.5px">0</div>
<div class="c" style="left:582.5px;top:119.6px">14:27 - 24/02/2021</div>
<div class="c" style="left:72.4px;top:147.4px">267</div>
<div class="l" style="left:151.8px;top:147.4px">|--- Hồ sơ năng lực</div>
<div class="c" style="left:333.0px;top:147.4px">0</div>
<div class="c" style="left:386.0px;top:147.4px">Menu chính</div>
<div class="l" style="left:490.7px;top:147.4px;color:#555;font-size:7.5px">0</div>
<div class="c" style="left:582.5px;top:147.4px">14:25 - 24/02/2021</div>
<div class="c" style="left:72.4px;top:175.2px">133</div>
<div class="l" style="left:151.8px;top:175.2px">|--- Tuyển dụng</div>
<div class="c" style="left:333.0px;top:175.2px">0</div>
<div class="c" style="left:386.0px;top:175.2px">Menu chính</div>
<div class="l" style="left:490.7px;top:175.2px;color:#555;font-size:7.5px">6</div>
<div class="c" style="left:502.0px;top:175.2px">Kinh Đô</div>
<div class="c" style="left:582.5px;top:175.2px">17:00 - 19/05/2018</div>
<div class="c" style="left:72.4px;top:203.0px">131</div>
<div class="l" style="left:151.8px;top:203.0px">Tên miền</div>
<div class="c" style="left:333.0px;top:203.0px">8</div>
<div class="c" style="left:386.0px;top:203.0px">Menu chính</div>
<div class="l" style="left:490.7px;top:203.0px;color:#555;font-size:7.5px">2</div>
<div class="c" style="left:502.0px;top:203.0px">Kinh Đô</div>
<div class="c" style="left:582.5px;top:203.0px">16:59 - 19/05/2018</div>
<div class="c" style="left:72.4px;top:230.7px">276</div>
<div class="l" style="left:151.8px;top:230.7px">|--- Quy trình đổi tên chủ thể tên miền</div>
<div class="c" style="left:333.0px;top:230.7px">0</div>
<div class="c" style="left:386.0px;top:230.7px">Menu chính</div>
<div class="l" style="left:490.7px;top:230.7px;color:#555;font-size:7.5px">0</div>
<div class="c" style="left:582.5px;top:230.7px">17:15 - 24/02/2021</div>
<div class="c" style="left:72.4px;top:258.5px">275</div>
<div class="l" style="left:151.8px;top:258.5px">|--- Quy trình thay đổi thông tin tên miền</div>
<div class="c" style="left:333.0px;top:258.5px">0</div>
<div class="c" style="left:386.0px;top:258.5px">Menu chính</div>
<div class="l" style="left:490.7px;top:258.5px;color:#555;font-size:7.5px">0</div>
<div class="c" style="left:582.5px;top:258.5px">17:08 - 24/02/2021</div>
<div class="c" style="left:72.4px;top:286.3px">274</div>
<div class="l" style="left:151.8px;top:286.3px">|--- Quy trình chuyển đổi Nhà đăng ký</div>
<div class="c" style="left:333.0px;top:286.3px">0</div>
<div class="c" style="left:386.0px;top:286.3px">Menu chính</div>
<div class="l" style="left:490.7px;top:286.3px;color:#555;font-size:7.5px">0</div>
<div class="c" style="left:582.5px;top:286.3px">17:06 - 24/02/2021</div>
<div class="c" style="left:72.4px;top:314.1px">272</div>
<div class="l" style="left:151.8px;top:314.1px">|--- Quy trình đổi tên chủ thể tên miền</div>
<div class="c" style="left:333.0px;top:314.1px">0</div>
<div class="c" style="left:386.0px;top:314.1px">Menu chính</div>
<div class="l" style="left:490.7px;top:314.1px;color:#555;font-size:7.5px">0</div>
<div class="c" style="left:582.5px;top:314.1px">17:01 - 24/02/2021</div>
<div class="c" style="left:72.4px;top:341.9px">271</div>
<div class="l" style="left:151.8px;top:341.9px">|--- Quy trình gia hạn tên miền</div>
<div class="c" style="left:333.0px;top:341.9px">0</div>
<div class="c" style="left:386.0px;top:341.9px">Menu chính</div>
<div class="l" style="left:490.7px;top:341.9px;color:#555;font-size:7.5px">0</div>
<div class="c" style="left:582.5px;top:341.9px">16:57 - 24/02/2021</div>
<div class="c" style="left:72.4px;top:369.7px">246</div>
<div class="l" style="left:151.8px;top:369.7px">|--- Biểu mẫu hồ sơ đăng ký</div>
<div class="c" style="left:333.0px;top:369.7px">0</div>
<div class="c" style="left:386.0px;top:369.7px">Menu chính</div>
<div class="l" style="left:490.7px;top:369.7px;color:#555;font-size:7.5px">0</div>
<div class="c" style="left:582.5px;top:369.7px">08:42 - 12/08/2020</div>
<div class="c" style="left:72.4px;top:397.5px">245</div>
<div class="l" style="left:151.8px;top:397.5px">|--- Quy trình đăng ký tên miền</div>
<div class="c" style="left:333.0px;top:397.5px">3</div>
<div class="c" style="left:386.0px;top:397.5px">Menu chính</div>
<div class="l" style="left:490.7px;top:397.5px;color:#555;font-size:7.5px">0</div>
<div class="c" style="left:582.5px;top:397.5px">08:40 - 12/08/2020</div>
<svg class="abs" style="left:0;top:0;width:850px;height:420px;pointer-events:none" viewBox="0 0 850 420">
<defs><marker id="ah" viewBox="0 0 10 10" refX="9.5" refY="5" markerWidth="5.6" markerHeight="4.4" orient="auto"><path d="M0 0.8 L10 5 L0 9.2Z" fill="#f21616"/></marker></defs>
<rect x="7.7" y="368.7" width="86" height="48" fill="none" stroke="#f21616" stroke-width="1.7"/>
<rect x="760.4" y="82.7" width="25.8" height="327.6" fill="none" stroke="#f21616" stroke-width="1.8"/>
<path d="M115 385.4 L54.4 377.2" stroke="#f21616" stroke-width="1.7" marker-end="url(#ah)"/>
<path d="M115 385.4 L48 412.8" stroke="#f21616" stroke-width="1.7" marker-end="url(#ah)"/>
<path d="M695 48.8 L774.6 96.8" stroke="#f21616" stroke-width="1.7" marker-end="url(#ah)"/>
</svg>
</body></html>
